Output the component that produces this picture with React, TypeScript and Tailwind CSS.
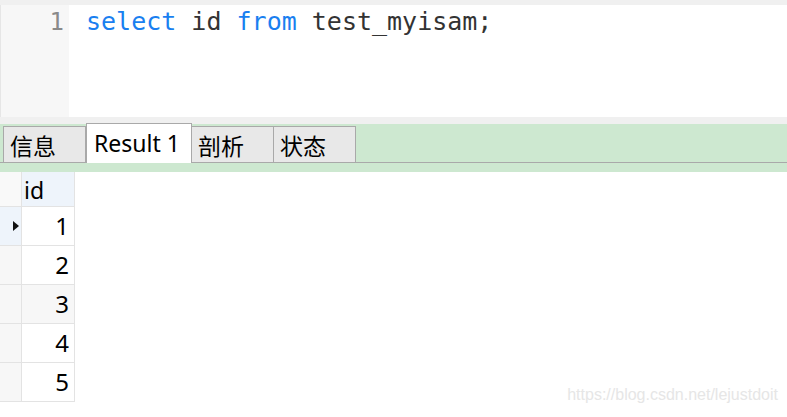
import React from 'react'

const rows = [1, 2, 3, 4, 5]

const tabs = [
  { label: '信息', w: 'w-[83px]', active: false },
  { label: 'Result 1', w: 'w-[106px]', active: true },
  { label: '剖析', w: 'w-[83px]', active: false },
  { label: '状态', w: 'w-[83px]', active: false },
]

export default function App() {
  return (
    <div className="relative w-[787px] h-[417px] overflow-hidden bg-white font-['Noto_Sans','Noto_Sans_CJK_SC',sans-serif] text-black">
      <div className="h-[5px] bg-[#f0f0f0]" />
      {/* editor */}
      <div className="flex h-[112px]">
        <div className="w-[69px] bg-[#f7f7f7] border-l border-[#e6e6e6] pr-[5px] text-right font-['DejaVu_Sans_Mono',monospace] text-[24px] leading-[34px] text-[#8a8a8a]">
          1
        </div>
        <div className="flex-1 pl-[17px] font-['DejaVu_Sans_Mono',monospace] text-[25px] leading-[34px] text-[#333] whitespace-pre">
          <span className="text-[#1a7ff0]">select</span> id <span className="text-[#1a7ff0]">from</span> test_myisam;
        </div>
      </div>
      <div className="h-[7px] bg-[#f0f0f0]" />
      {/* tab strip */}
      <div className="bg-[#cde8d0] h-[48px]">
        <div className="flex items-end h-[39px] pl-[3px] border-b border-[#a9a9a9]">
          {tabs.map(t => (
            <div
              key={t.label}
              className={
                t.active
                  ? `${t.w} h-[40px] -mb-px bg-white border border-b-0 border-[#a9a9a9] pl-[7px] text-[23px] leading-[38px]`
                  : `${t.w} h-[36px] bg-[#e8e8e8] border border-b-0 border-[#a9a9a9] -ml-px first:ml-0 pl-[6px] text-[23px] leading-[38px]`
              }
            >
              {t.label}
            </div>
          ))}
        </div>
      </div>
      {/* result grid */}
      <div className="flex flex-col w-[75px]">
        <div className="flex h-[35px] border-b border-[#e3e3e3]">
          <div className="w-[22px] bg-[#f9f9f9] border-r border-[#e3e3e3]" />
          <div className="w-[53px] bg-[#eef4fb] border-r border-[#e3e3e3] pl-[2px] text-[23px] leading-[36px]">id</div>
        </div>
        {rows.map(n => (
          <div key={n} className="flex h-[39px] border-b border-[#e3e3e3]">
            <div className={`w-[22px] border-r border-[#e3e3e3] flex items-center pl-[13px] ${n === 1 ? 'bg-[#eef4fb]' : 'bg-[#f7f7f7]'}`}>
              {n === 1 && (
                <svg width="6" height="10" viewBox="0 0 6 10">
                  <path d="M0 0 L6 5 L0 10 Z" fill="#111" />
                </svg>
              )}
            </div>
            <div className={`w-[53px] border-r border-[#e3e3e3] pr-[5px] text-right text-[24px] leading-[38px] ${n === 3 ? 'bg-[#f7f7f7]' : 'bg-white'}`}>
              {n}
            </div>
          </div>
        ))}
      </div>
      {/* watermark */}
      <div className="absolute right-[9px] bottom-[10px] font-['Liberation_Sans',sans-serif] text-[16px] text-[#e6e6e6]">
        https://blog.csdn.net/lejustdoit
      </div>
    </div>
  )
}
